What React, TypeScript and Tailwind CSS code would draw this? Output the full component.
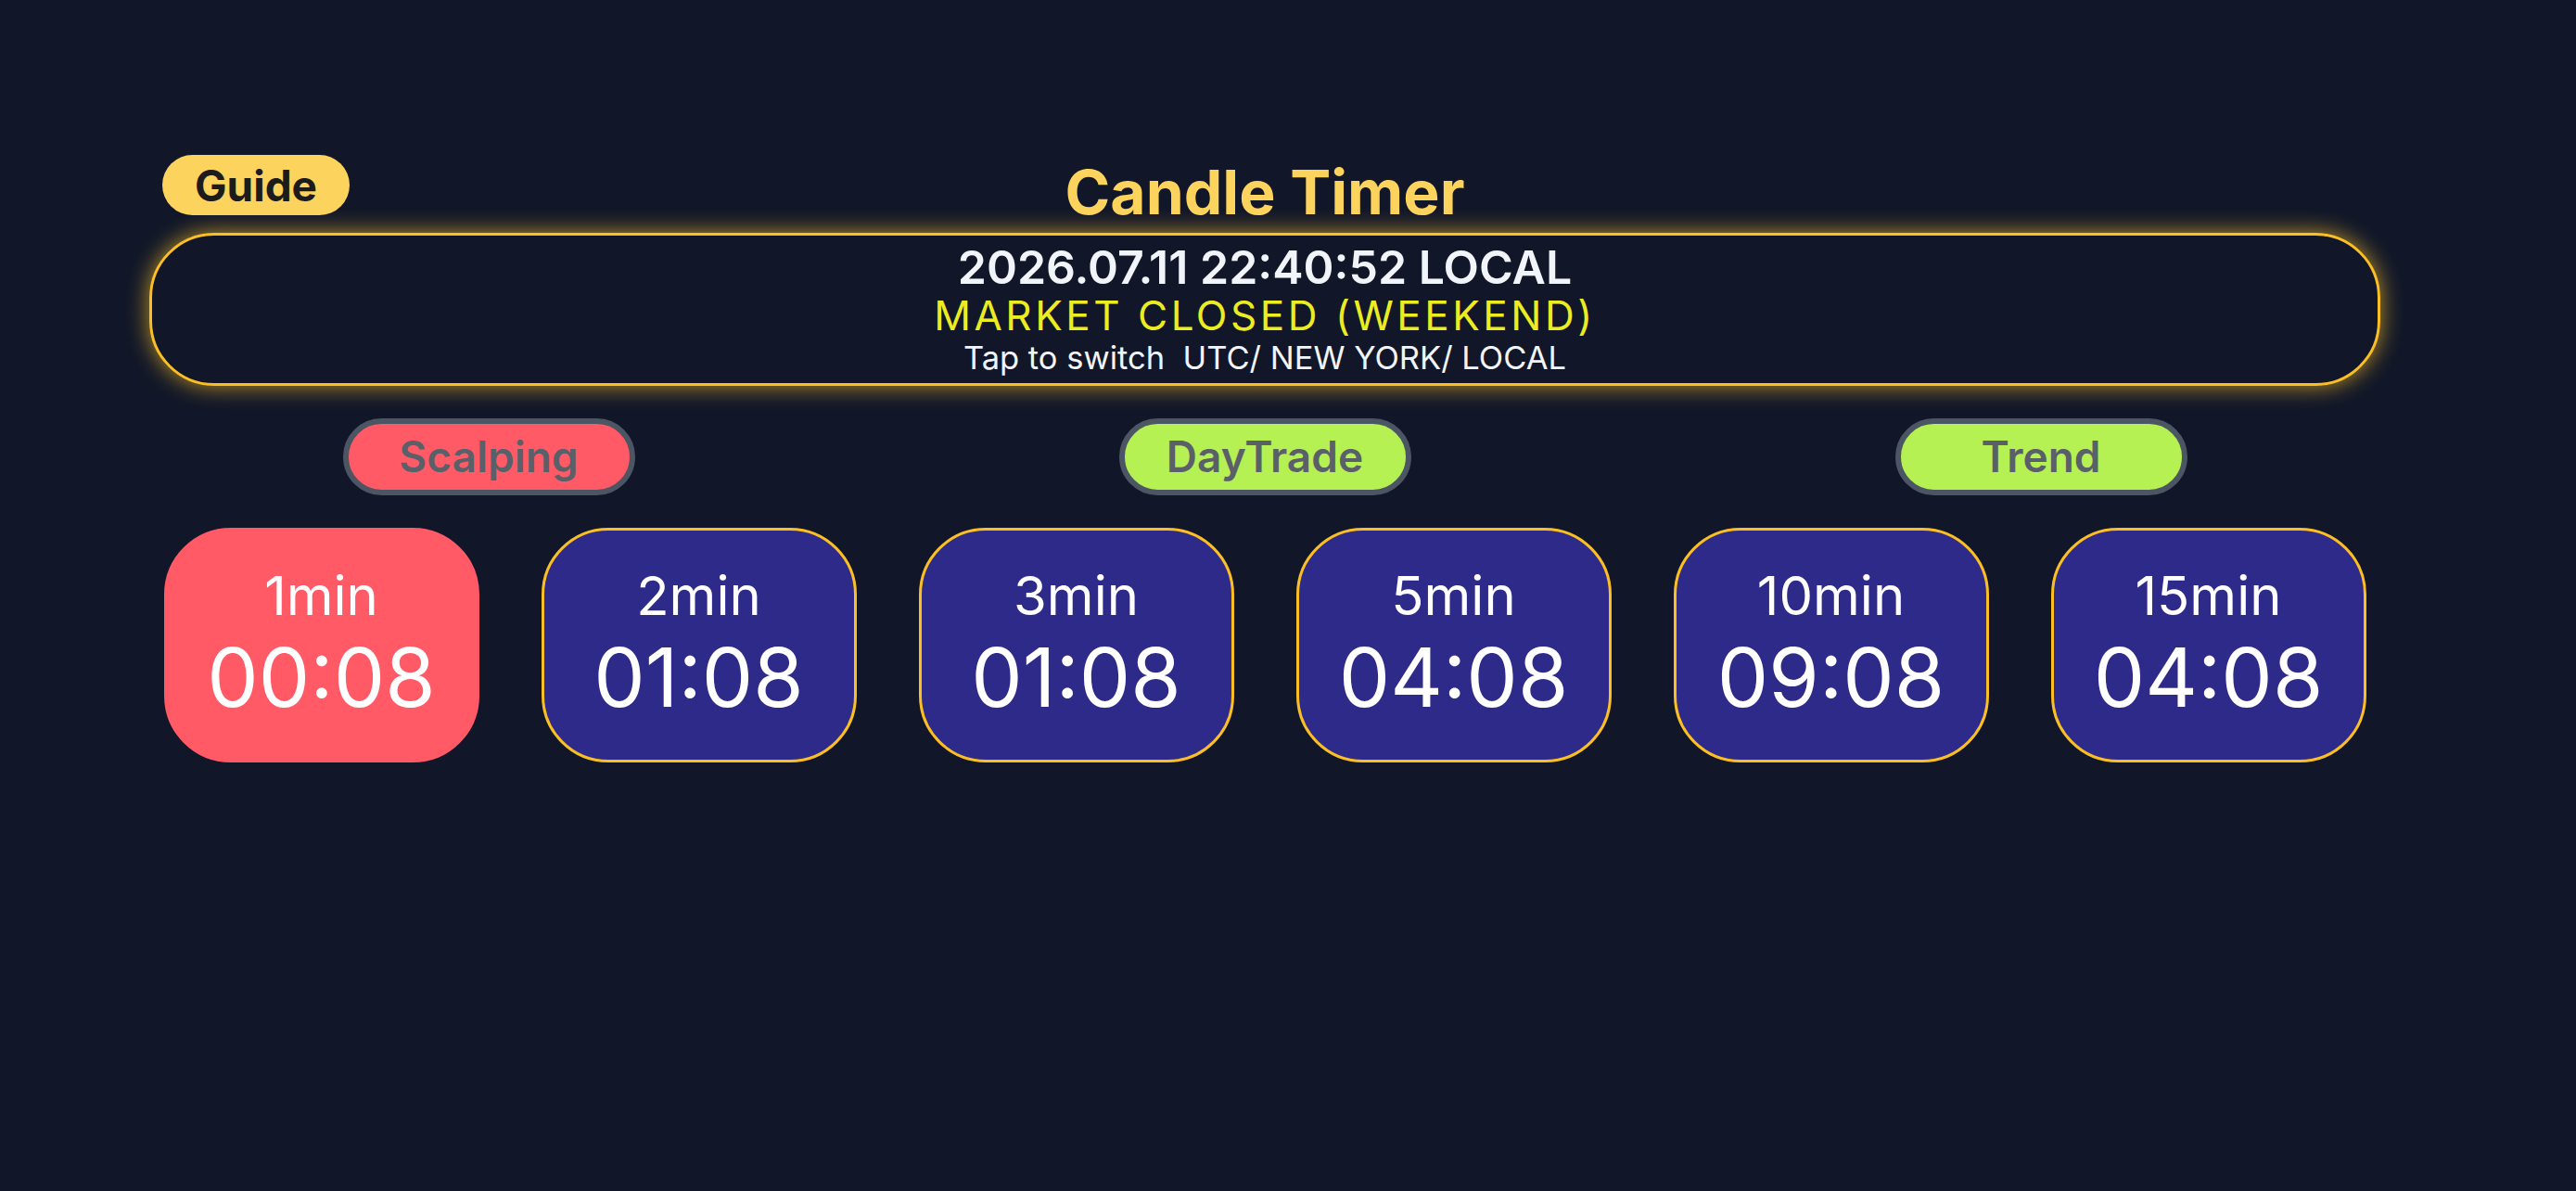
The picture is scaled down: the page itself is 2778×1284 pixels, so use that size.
import React from 'react';

interface Timer {
  label: string;
  left: string;
  active?: boolean;
}

const timers: Timer[] = [
  { label: '1min', left: '00:08', active: true },
  { label: '2min', left: '01:08' },
  { label: '3min', left: '01:08' },
  { label: '5min', left: '04:08' },
  { label: '10min', left: '09:08' },
  { label: '15min', left: '04:08' },
];

const modes = [
  { name: 'Scalping', bg: 'bg-[#ff5a65]' },
  { name: 'DayTrade', bg: 'bg-[#b5f152]' },
  { name: 'Trend', bg: 'bg-[#b5f152]' },
];

const App = () => {
  return (
    <div className="min-h-screen bg-[#111729] font-['Inter','Noto_Sans',sans-serif]">
      <div className="ml-[161px] w-[2406px] pt-[167px]">
        {/* header */}
        <div className="grid grid-cols-[1fr_auto_1fr] items-start">
          <button className="ml-[14px] flex h-[65px] items-center justify-self-start rounded-full bg-[#fcd35c] px-[35px] text-[46px] font-bold leading-none text-[#1c1c1c]">
            Guide
          </button>
          <h1 className="text-[66px] font-bold leading-[80px] text-[#fcd35c]">Candle Timer</h1>
          <div />
        </div>

        {/* clock panel */}
        <div className="mt-[4px] flex h-[165px] flex-col items-center rounded-[70px] border-[3px] border-[#fbbf24] pt-[7px] shadow-[0_0_24px_rgba(251,191,36,0.75)]">
          <div className="text-[50px] font-semibold leading-[54px] text-[#f1f5f9]">2026.07.11 22:40:52 LOCAL</div>
          <div className="text-[44px] leading-[50px] tracking-[0.08em] text-[#ecec22]">MARKET CLOSED (WEEKEND)</div>
          <div className="whitespace-pre text-[34.5px] leading-[42px] text-[#f1f5f9]">Tap to switch  UTC/ NEW YORK/ LOCAL</div>
        </div>

        {/* trading modes */}
        <div className="mt-[35px] flex justify-center gap-[522px]">
          {modes.map((m) => (
            <div
              key={m.name}
              className={`flex h-[83px] w-[315px] items-center justify-center rounded-full border-[6px] border-[#4b5563] ${m.bg} text-[46px] font-semibold text-[#5a6069]`}
            >
              {m.name}
            </div>
          ))}
        </div>

        {/* candle timers */}
        <div className="mt-[35px] flex justify-center gap-[67px]">
          {timers.map((t) => (
            <div
              key={t.label}
              className={
                t.active
                  ? 'flex h-[253px] w-[340px] flex-col items-center justify-center rounded-[72px] border-[3px] border-[#ff5a65] bg-[#ff5a65] text-white'
                  : 'flex h-[253px] w-[340px] flex-col items-center justify-center rounded-[72px] border-[3px] border-[#fbbf24] bg-[#2e2a8a] text-white'
              }
            >
              <div className="text-[58px] leading-[1.2]">{t.label}</div>
              <div className="text-[88px] leading-[1.2]">{t.left}</div>
            </div>
          ))}
        </div>
      </div>
    </div>
  );
};

export default App;
